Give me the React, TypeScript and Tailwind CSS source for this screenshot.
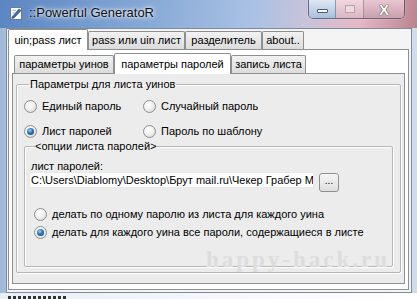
import type { ReactNode } from "react"

const ui = { fontFamily: '"Liberation Sans", Arial, sans-serif' }

function Radio({ checked, children }: { checked?: boolean; children: ReactNode }) {
  return (
    <div className="flex items-center gap-[5px] h-[16px]">
      <span className="w-[13px] h-[13px] rounded-full border border-[#8f8f8f] bg-[radial-gradient(circle_at_40%_35%,#ffffff_0%,#f1f1f1_45%,#cfcfcf_100%)] flex items-center justify-center shrink-0">
        {checked && (
          <span className="w-[7px] h-[7px] rounded-full bg-[radial-gradient(circle_at_40%_35%,#9fd2f5_0%,#2a73b4_45%,#0f3f70_100%)]" />
        )}
      </span>
      <span className="text-[11px] text-black leading-none whitespace-nowrap">{children}</span>
    </div>
  )
}

function Tab({ active, children, w }: { active?: boolean; children: ReactNode; w: string }) {
  return (
    <div
      className={
        active
          ? `${w} h-[21px] -mb-px relative z-10 bg-white border border-b-0 border-[#8e8f8f] rounded-t-[2px] flex items-center justify-center text-[11px] text-black whitespace-nowrap`
          : `${w} h-[18px] bg-[linear-gradient(#f2f2f2,#dcdcdc)] border border-b-0 border-[#8e8f8f] rounded-t-[2px] flex items-center justify-center text-[11px] text-black whitespace-nowrap`
      }
    >
      {children}
    </div>
  )
}

function CaptionButtons() {
  return (
    <div className="flex h-[19px] rounded-b-[5px] border border-t-0 border-[#3b4b64]/70 overflow-hidden shadow-[0_0_1px_#fff]">
      <div className="w-[27px] flex items-center justify-center bg-[linear-gradient(#dfe8f5,#a9bedd)] border-r border-[#5a6c88]/60">
        <span className="block w-[11px] h-[4px] mt-[4px] bg-white border border-[#4b5870] rounded-[1px]" />
      </div>
      <div className="w-[28px] flex items-center justify-center bg-[linear-gradient(#f1d7df,#d9b6c2)] border-r border-[#8a6a78]/60">
        <span className="block w-[10px] h-[8px] border border-[#b9a2ab] bg-[#eadde2]" />
      </div>
      <div className="w-[40px] flex items-center justify-center bg-[linear-gradient(#e9c7d2,#c9a0ae)]">
        <span className="text-[15px] font-bold leading-none text-white [text-shadow:0_0_1px_#2b2b2b,0_0_1px_#2b2b2b]">
          X
        </span>
      </div>
    </div>
  )
}

export default function App() {
  return (
    <div
      className="w-[417px] h-[299px] overflow-hidden bg-[linear-gradient(90deg,#9fb8d9_0%,#d5e2f1_10%,#e6eef7_50%,#cfdcec_100%)] flex flex-col"
      style={ui}
    >
      {/* title bar */}
      <div className="h-[28px] shrink-0 flex items-start bg-[linear-gradient(100deg,#5b86c2_0%,#86a8d6_35%,#a9c1e4_60%,#c9c3d9_74%,#e7b8c6_86%,#b9838f_100%)]">
        <div className="flex items-center h-[26px] pl-[10px] gap-[6px]">
          <svg width="13" height="14" viewBox="0 0 13 14">
            <rect x="0.5" y="1.5" width="11" height="12" fill="#f7f9fc" stroke="#6b7d95" />
            <path d="M2 11 L9 3 L11 4.5 L4 12 L1.8 12.4 Z" fill="#3f6fb0" stroke="#223e66" strokeWidth="0.6" />
            <path d="M2.5 4.5 H6 M2.5 7 H5" stroke="#9aa9bd" strokeWidth="0.8" />
          </svg>
          <span className="text-[13px] text-[#111] [text-shadow:0_0_6px_#fff,0_0_3px_#fff]">::Powerful GeneratoR</span>
        </div>
        <div className="ml-auto mr-[12px]">
          <CaptionButtons />
        </div>
      </div>

      {/* client area */}
      <div className="ml-[6px] w-[406px] h-[265px] shrink-0 bg-[#f4f4f4] border border-[#7d8a9c] pl-[1px] pr-[2px] flex flex-col">
        <div className="flex items-end h-[20px]">
          <Tab active w="w-[80px]">uin;pass лист</Tab>
          <Tab w="w-[97px]">pass или uin лист</Tab>
          <Tab w="w-[77px]">разделитель</Tab>
          <Tab w="w-[42px]">about..</Tab>
        </div>
        <div className="h-[241px] bg-white border border-[#8e8f8f] pl-[3px] pr-[3px] flex flex-col">
          <div className="flex items-end h-[23px] pl-[2px]">
            <Tab w="w-[100px]">параметры уинов</Tab>
            <Tab active w="w-[117px]">параметры паролей</Tab>
            <Tab w="w-[75px]">запись листа</Tab>
          </div>
          <div className="h-[211px] bg-[#ececec] border border-[#8e8f8f] px-[3px] pt-[4px]">
            <fieldset className="h-[195px] border border-[#b6b6b6] rounded-[2px] shadow-[inset_1px_1px_0_#fff,1px_1px_0_#fff] px-[7px]">
              <legend className="text-[11px] text-black px-[1px] ml-[5px] leading-[13px]">Параметры для листа уинов</legend>
              <div className="grid grid-cols-[119px_1fr] gap-y-[9px] pt-[7px]">
                <Radio>Единый пароль</Radio>
                <Radio>Случайный пароль</Radio>
                <Radio checked>Лист паролей</Radio>
                <Radio>Пароль по шаблону</Radio>
              </div>
              <fieldset className="mt-[1px] h-[127px] border border-[#b6b6b6] rounded-[2px] shadow-[inset_1px_1px_0_#fff,1px_1px_0_#fff] px-[4px] relative">
                <legend className="text-[11px] text-black ml-[6px] leading-[13px]">&lt;опции листа паролей&gt;</legend>
                <div className="text-[11px] text-black pt-[7px] pl-[2px] leading-[13px]">лист паролей:</div>
                <div className="flex items-start gap-[5px] mt-[-1px]">
                  <div className="w-[285px] h-[16px] bg-white border border-[#e8e8e8] overflow-hidden whitespace-nowrap text-[11px] text-black leading-[14px] pl-[1px]">
                    C:\Users\Diablomy\Desktop\Брут mail.ru\Чекер Грабер М
                  </div>
                  <div className="w-[20px] h-[19px] mt-[1px] rounded-[3px] border border-[#8e8f8f] bg-[linear-gradient(#f6f6f6,#dedede)] flex items-center justify-center text-[10px] leading-none pb-[3px]">
                    ...
                  </div>
                </div>
                <div className="flex flex-col gap-[2px] mt-[14px] pl-[5px]">
                  <Radio>делать по одному паролю из листа для каждого уина</Radio>
                  <Radio checked>делать для каждого уина все пароли, содержащиеся в листе</Radio>
                </div>
                <div
                  className="absolute right-[2px] bottom-[-5px] text-[23px] font-bold text-[#dddddd] tracking-[3px] leading-none"
                  style={{ fontFamily: '"Liberation Serif", serif' }}
                >
                  happy-hack.ru
                </div>
              </fieldset>
            </fieldset>
          </div>
        </div>
      </div>
      <div className="flex-1 bg-[linear-gradient(90deg,#e9eef5,#ffffff)] pt-[3px] pl-[8px]">
        <div className="w-[60px] h-[3px] bg-[repeating-linear-gradient(90deg,#333_0px,#333_3px,transparent_3px,transparent_5px)]" />
      </div>
    </div>
  )
}
